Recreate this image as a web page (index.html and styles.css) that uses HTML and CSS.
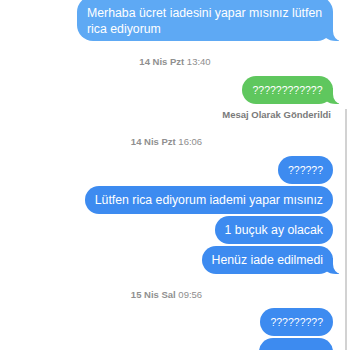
FILE: index.html
```html
<!DOCTYPE html>
<html>
<head>
<meta charset="utf-8">
<link rel="stylesheet" href="styles.css">
</head>
<body>
<div class="chat">
  <div class="row first-row">
    <div class="bubble light tail two-line">Merhaba ücret iadesini yapar mısınız lütfen rica ediyorum</div>
  </div>
  <div class="stamp"><b>14 Nis Pzt</b> 13:40</div>
  <div class="row">
    <div class="bubble green tail q">????????????</div>
  </div>
  <div class="rest">
    <div class="delivered">Mesaj Olarak Gönderildi</div>
    <div class="stamp s2"><b>14 Nis Pzt</b> 16:06</div>
    <div class="group">
      <div class="bubble blue q">??????</div>
      <div class="bubble blue">Lütfen rica ediyorum iademi yapar mısınız</div>
      <div class="bubble blue">1 buçuk ay olacak</div>
      <div class="bubble blue tail">Henüz iade edilmedi</div>
    </div>
    <div class="stamp s3"><b>15 Nis Sal</b> 09:56</div>
    <div class="group">
      <div class="bubble blue q">?????????</div>
      <div class="bubble blue q wide">&nbsp;</div>
    </div>
  </div>
</div>
</body>
</html>
```
FILE: styles.css
```css
html, body {
  margin: 0;
  padding: 0;
  background: #ffffff;
  width: 350px;
  height: 350px;
  overflow: hidden;
}
.chat {
  font-family: "Liberation Sans", Arial, sans-serif;
  display: flex;
  flex-direction: column;
  margin-top: -4px;
}
.row {
  display: flex;
  justify-content: flex-end;
  padding-right: 17px;
}
.bubble {
  position: relative;
  z-index: 0;
  color: #ffffff;
  font-size: 12.3px;
  line-height: 28px;
  height: 28px;
  padding: 0 10px;
  border-radius: 14px;
  white-space: nowrap;
  box-sizing: border-box;
}
.bubble.two-line {
  white-space: normal;
  width: 256px;
  height: 45px;
  line-height: 15.5px;
  padding: 10px 10px 0 10px;
  border-radius: 16px;
}
.light { background: #5ea9f4; }
.blue { background: #3d8bf0; }
.green { background: #5fc75e; }
.q { font-size: 10.5px; }
.tail::before {
  content: "";
  position: absolute;
  right: -6px;
  bottom: 0;
  width: 18px;
  height: 16px;
  background: inherit;
  border-bottom-left-radius: 15px 12px;
  z-index: -1;
}
.tail::after {
  content: "";
  position: absolute;
  right: -12px;
  bottom: 0;
  width: 12px;
  height: 16px;
  background: #ffffff;
  border-bottom-left-radius: 8px 10px;
  z-index: -1;
}
.stamp {
  text-align: center;
  font-size: 9.5px;
  color: #8e8e8e;
  line-height: 12px;
}
.stamp b { font-weight: 700; color: #909090; }
.first-row + .stamp { margin-top: 15px; margin-bottom: 8px; }
.row .green { width: 91px; text-align: center; }
.rest {
  display: flex;
  flex-direction: column;
  margin-top: 5px;
  margin-right: 3px;
  border-right: 2px solid #d2d2d2;
  padding-right: 12px;
}
.delivered {
  text-align: right;
  font-size: 9.5px;
  font-weight: 700;
  color: #7a7a7a;
  line-height: 12px;
  padding-right: 2px;
}
.s2 { margin-top: 15px; margin-bottom: 8px; }
.s3 { margin-top: 15px; margin-bottom: 7px; }
.group {
  display: flex;
  flex-direction: column;
  align-items: flex-end;
  gap: 2px;
}
.wide { width: 74px; }
```
